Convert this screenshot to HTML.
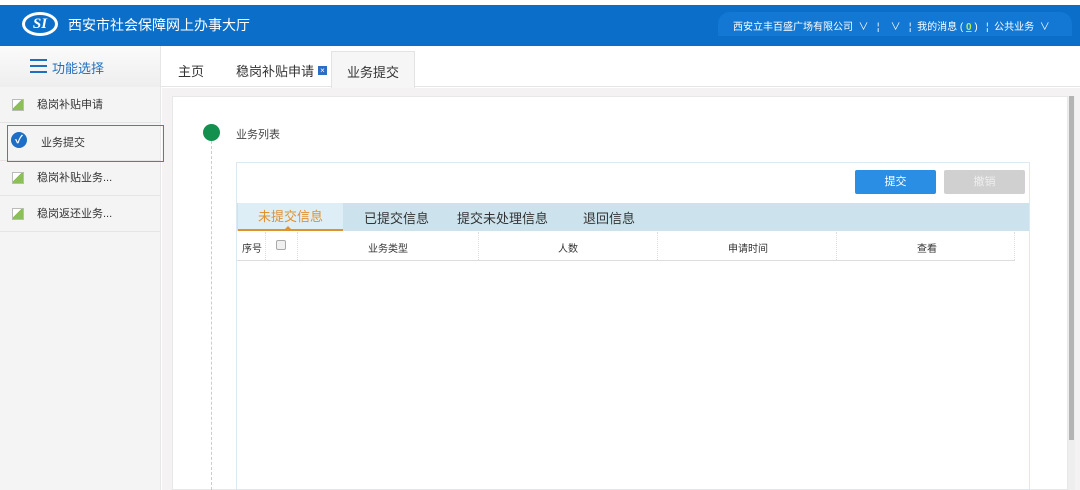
<!DOCTYPE html>
<html><head><meta charset="utf-8"><style>
*{margin:0;padding:0;box-sizing:border-box}
body{width:1080px;height:490px;overflow:hidden;background:#fff;font-family:"Liberation Sans","Noto Sans CJK SC",sans-serif;position:relative;color:#333}
.a{position:absolute}
.hdr{left:0;top:5px;width:1080px;height:41px;background:#0b6fca}
.side{left:0;top:46px;width:161px;height:444px;background:#f4f4f4;border-right:1px solid #e6e6e6}
.item{position:absolute;left:0;width:160px;height:36px;border-bottom:1px solid #e4e4e4;font-size:11px;line-height:36px;padding-left:37px;color:#333}
.img{position:absolute;left:12px;top:12px;width:12px;height:12px;border:1px solid #bbb;background:linear-gradient(135deg,#fff 40%,#8bbf5a 41%)}
</style></head><body>
<div class="a hdr"></div>
<div class="a" style="left:22px;top:12px;width:36px;height:24px;border:3px solid #fff;border-radius:50%;color:#fff;font:italic bold 15px 'Liberation Serif',serif;text-align:center;line-height:18px">SI</div>
<div class="a" style="left:68px;top:15px;color:#fff;font-size:14px">西安市社会保障网上办事大厅</div>
<div class="a" style="left:718px;top:12px;width:354px;height:24px;border-radius:12px 12px 0 0;background:#1278d4"></div>
<div class="a" style="left:733px;top:18px;color:#fff;font-size:10px;white-space:pre">西安立丰百盛广场有限公司  ∨   ¦    ∨   ¦  我的消息 ( <span style="color:#b6f04a;text-decoration:underline;font-weight:bold">0</span> )   ¦  公共业务  ∨</div>

<div class="a side"></div>
<div class="a" style="left:0;top:46px;width:160px;height:41px;background:linear-gradient(#fbfbfb,#eeeeee)"></div>
<div class="a" style="left:30px;top:59px;width:17px;height:14px;border-top:2px solid #1f6fbf;border-bottom:2px solid #1f6fbf"></div>
<div class="a" style="left:30px;top:65px;width:17px;height:2px;background:#1f6fbf"></div>
<div class="a" style="left:52px;top:58px;font-size:13px;color:#1f6fbf">功能选择</div>
<div class="item" style="top:87px"><span class="img"></span>稳岗补贴申请</div>
<div class="item" style="top:123px;height:38px"></div>
<div class="a" style="left:7px;top:125px;width:157px;height:37px;border:1px solid #e2464b;z-index:3"></div>
<div class="a" style="left:11px;top:132px;width:16px;height:16px;border-radius:50%;background:#1d6ec4;color:#fff;font-size:11px;text-align:center;line-height:16px;font-weight:bold">✓</div>
<div class="a" style="left:41px;top:134px;font-size:11px">业务提交</div>
<div class="item" style="top:160px"><span class="img"></span>稳岗补贴业务...</div>
<div class="item" style="top:196px"><span class="img"></span>稳岗返还业务...</div>

<div class="a" style="left:161px;top:46px;width:919px;height:41px;background:#fff;border-bottom:1px solid #e5e5e5"></div>
<div class="a" style="left:178px;top:61px;font-size:13px">主页</div>
<div class="a" style="left:236px;top:61px;font-size:13px">稳岗补贴申请</div>
<div class="a" style="left:318px;top:66px;width:9px;height:9px;background:#2a6fc4;color:#fff;font-size:8px;line-height:9px;text-align:center">×</div>
<div class="a" style="left:331px;top:51px;width:84px;height:37px;background:#f6f6f6;border:1px solid #e3e3e3;border-bottom:none"></div>
<div class="a" style="left:347px;top:62px;font-size:13px">业务提交</div>

<div class="a" style="left:162px;top:88px;width:918px;height:402px;background:#f4f2f2"></div>
<div class="a" style="left:172px;top:96px;width:896px;height:394px;background:#fff;border:1px solid #e8e8e8"></div>
<div class="a" style="left:1068px;top:96px;width:7px;height:394px;background:#eee"></div>
<div class="a" style="left:1069px;top:96px;width:5px;height:344px;background:#b4b4b4"></div>

<div class="a" style="left:203px;top:124px;width:17px;height:17px;border-radius:50%;background:#13904e"></div>
<div class="a" style="left:211px;top:141px;height:349px;border-left:1px dashed #ccc"></div>
<div class="a" style="left:236px;top:126px;font-size:11px;color:#444">业务列表</div>

<div class="a" style="left:236px;top:162px;width:794px;height:328px;border:1px solid #dde9f0"></div>
<div class="a" style="left:855px;top:170px;width:81px;height:24px;background:#2a8ee4;border-radius:2px;color:#fff;font-size:11px;text-align:center;line-height:24px">提交</div>
<div class="a" style="left:944px;top:170px;width:81px;height:24px;background:#d0d0d0;border-radius:2px;color:#eee;font-size:11px;text-align:center;line-height:24px">撤销</div>
<div class="a" style="left:237px;top:203px;width:792px;height:28px;background:#cce3ee"></div>
<div class="a" style="left:238px;top:203px;width:105px;height:28px;background:#ddeef6;border-bottom:2px solid #e0922f;color:#e0922f;font-size:13px;text-align:center;line-height:27px">未提交信息</div>
<div class="a" style="left:285px;top:223px;width:0;height:0;border:3px solid transparent;border-bottom-color:#e0922f"></div>
<div class="a" style="left:364px;top:208px;font-size:13px">已提交信息</div>
<div class="a" style="left:457px;top:208px;font-size:13px">提交未处理信息</div>
<div class="a" style="left:583px;top:208px;font-size:13px">退回信息</div>
<div class="a" style="left:237px;top:231px;width:778px;height:30px;border-bottom:1px solid #ddd;font-size:10px"></div>
<div class="a" style="left:242px;top:240px;font-size:10px">序号</div>
<div class="a" style="left:276px;top:240px;width:10px;height:10px;border:1px solid #aaa;border-radius:2px;background:#f0f0f0"></div>
<div class="a" style="left:265px;top:232px;height:28px;border-left:1px dotted #ddd"></div>
<div class="a" style="left:297px;top:232px;height:28px;border-left:1px dotted #ddd"></div>
<div class="a" style="left:478px;top:232px;height:28px;border-left:1px dotted #ddd"></div>
<div class="a" style="left:657px;top:232px;height:28px;border-left:1px dotted #ddd"></div>
<div class="a" style="left:836px;top:232px;height:28px;border-left:1px dotted #ddd"></div>
<div class="a" style="left:1014px;top:232px;height:28px;border-left:1px dotted #ddd"></div>
<div class="a" style="left:368px;top:240px;font-size:10px">业务类型</div>
<div class="a" style="left:558px;top:240px;font-size:10px">人数</div>
<div class="a" style="left:728px;top:240px;font-size:10px">申请时间</div>
<div class="a" style="left:917px;top:240px;font-size:10px">查看</div>
</body></html>
